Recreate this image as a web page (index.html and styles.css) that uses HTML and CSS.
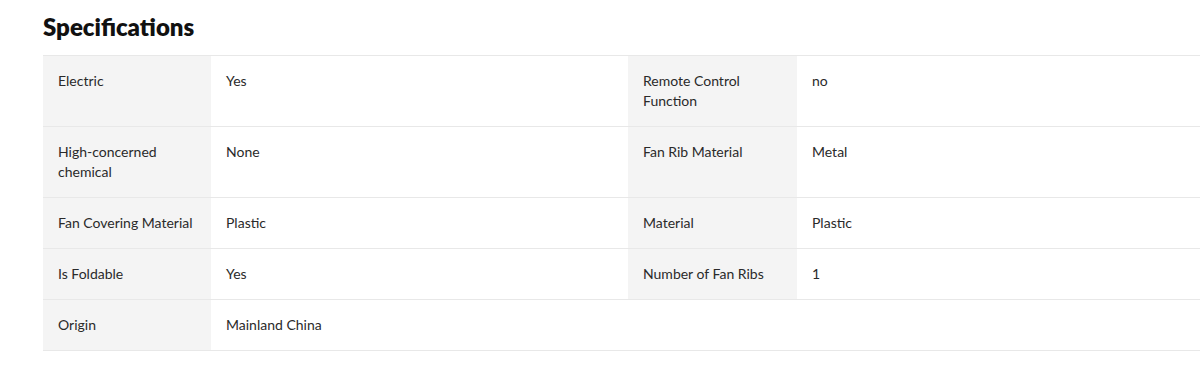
FILE: index.html
```html
<!DOCTYPE html>
<html lang="en">
<head>
<meta charset="utf-8">
<title>Specifications</title>
<link rel="stylesheet" href="styles.css">
</head>
<body>
<section class="specs">
  <h2 class="specs-title">Specifications</h2>
  <div class="specs-table">
    <div class="row">
      <div class="cell label">Electric</div>
      <div class="cell value">Yes</div>
      <div class="cell label">Remote Control Function</div>
      <div class="cell value">no</div>
    </div>
    <div class="row">
      <div class="cell label">High-concerned chemical</div>
      <div class="cell value">None</div>
      <div class="cell label">Fan Rib Material</div>
      <div class="cell value">Metal</div>
    </div>
    <div class="row">
      <div class="cell label">Fan Covering Material</div>
      <div class="cell value">Plastic</div>
      <div class="cell label">Material</div>
      <div class="cell value">Plastic</div>
    </div>
    <div class="row">
      <div class="cell label">Is Foldable</div>
      <div class="cell value">Yes</div>
      <div class="cell label">Number of Fan Ribs</div>
      <div class="cell value">1</div>
    </div>
    <div class="row">
      <div class="cell label">Origin</div>
      <div class="cell value">Mainland China</div>
    </div>
  </div>
</section>
</body>
</html>
```

FILE: styles.css
```css
html, body {
  margin: 0;
  padding: 0;
  background: #ffffff;
  overflow: hidden;
}

body {
  font-family: Lato, "Open Sans", Arial, sans-serif;
  color: #222222;
}

.specs {
  padding: 12px 0 0 43px;
}

.specs-title {
  margin: 0 0 13px 0;
  font-size: 24px;
  line-height: 30px;
  font-weight: 800;
  color: #111111;
}

.specs-table {
  width: 1171px;
  border-top: 1px solid #e8e8e8;
}

.row {
  display: grid;
  grid-template-columns: 168px 417px 169px 417px;
  border-bottom: 1px solid #e8e8e8;
}

.cell {
  padding: 15px 15px;
  font-size: 14px;
  line-height: 20px;
  color: #2a2a2a;
}

.label {
  background: #f4f4f4;
}

.value {
  background: #ffffff;
}
```
